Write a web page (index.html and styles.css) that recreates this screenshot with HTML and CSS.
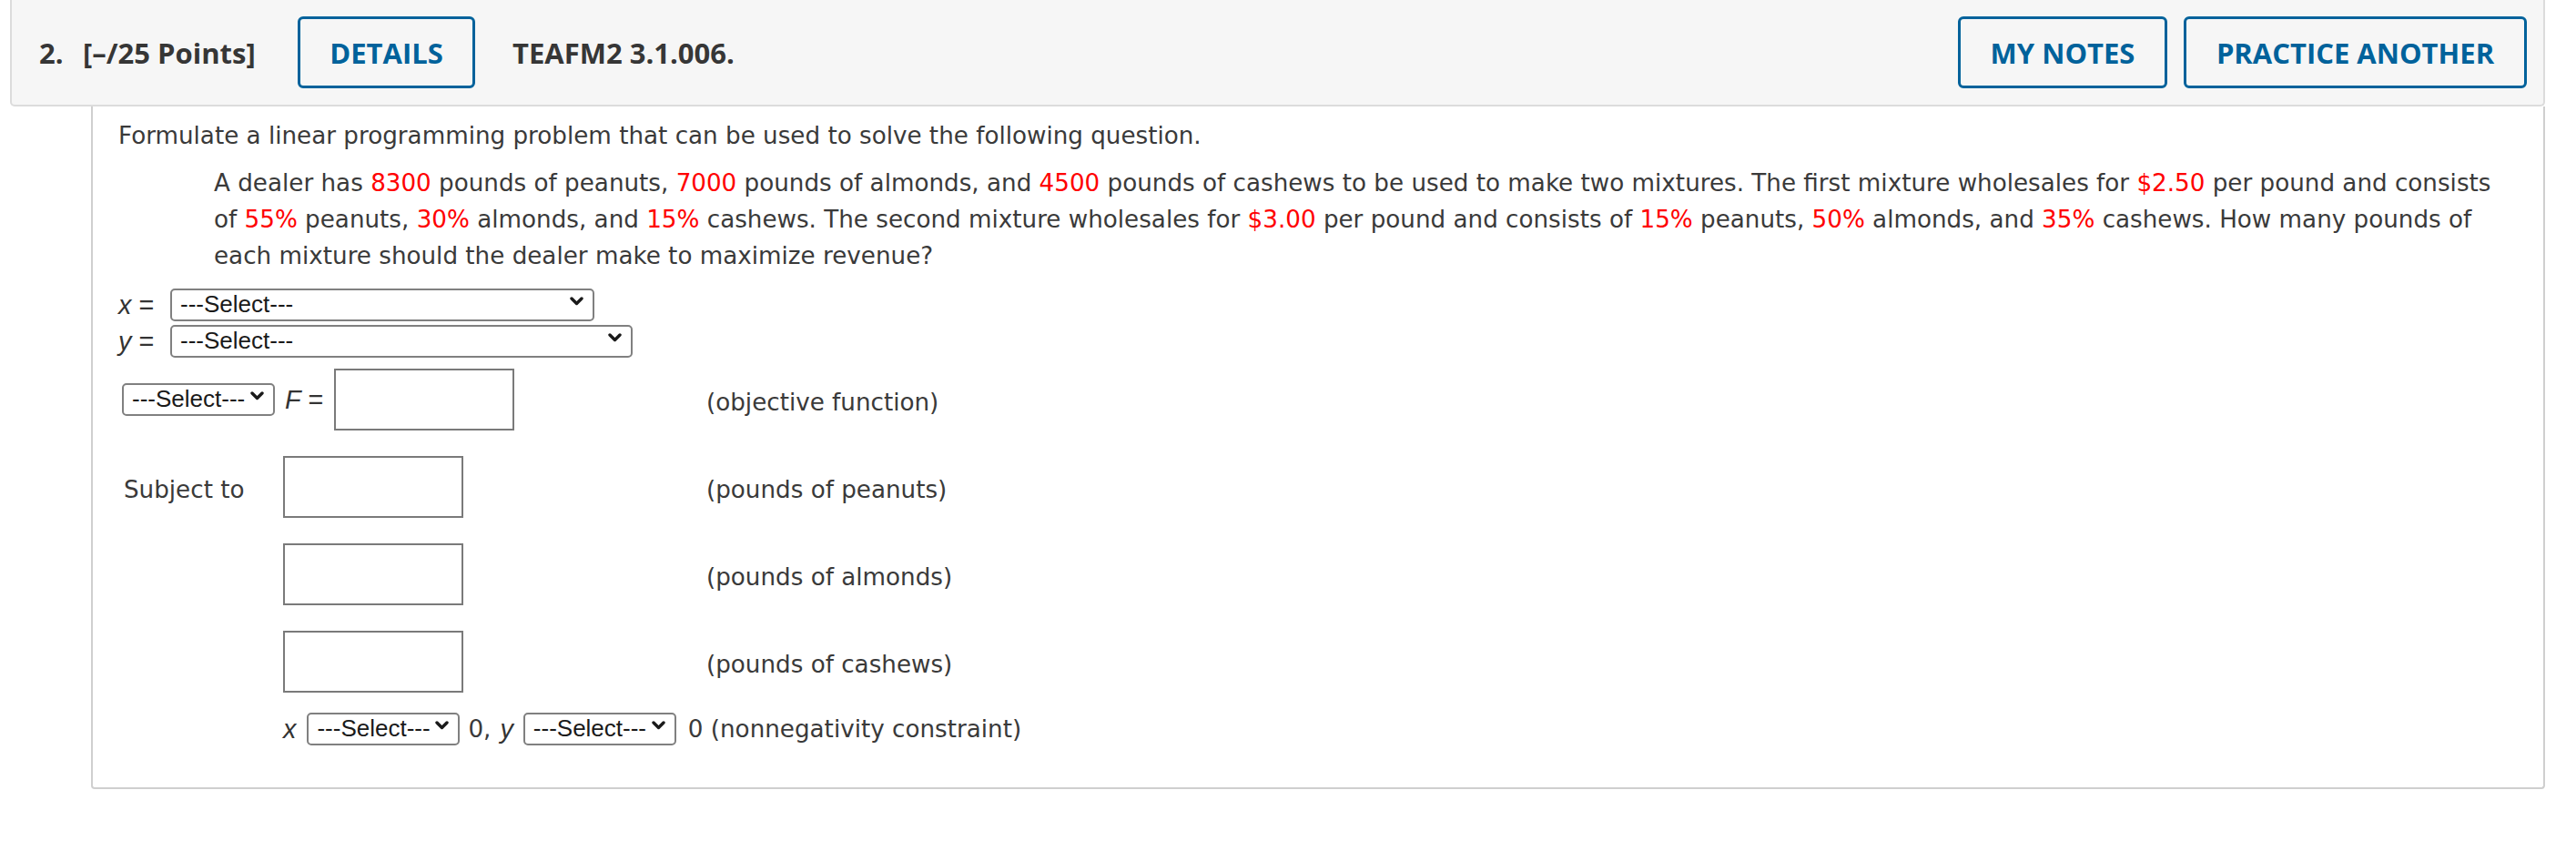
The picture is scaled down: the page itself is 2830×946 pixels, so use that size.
FILE: index.html
```html
<!DOCTYPE html>
<html lang="en">
<head>
<meta charset="utf-8">
<title>Question 2</title>
<link rel="stylesheet" href="styles.css">
</head>
<body>
<div class="question">
  <div class="q-header">
    <span class="q-num">2.</span>
    <span class="q-points">[&ndash;/25 Points]</span>
    <button class="btn btn-details">DETAILS</button>
    <span class="q-code">TEAFM2 3.1.006.</span>
    <div class="q-actions">
      <button class="btn btn-notes">MY NOTES</button>
      <button class="btn btn-practice">PRACTICE ANOTHER</button>
    </div>
  </div>
  <div class="q-body">
    <p class="prompt">Formulate a linear programming problem that can be used to solve the following question.</p>
    <p class="problem">A dealer has <span class="num">8300</span> pounds of peanuts, <span class="num">7000</span> pounds of almonds, and <span class="num">4500</span> pounds of cashews to be used to make two mixtures. The first mixture wholesales for <span class="num">$2.50</span> per pound and consists<br>of <span class="num">55%</span> peanuts, <span class="num">30%</span> almonds, and <span class="num">15%</span> cashews. The second mixture wholesales for <span class="num">$3.00</span> per pound and consists of <span class="num">15%</span> peanuts, <span class="num">50%</span> almonds, and <span class="num">35%</span> cashews. How many pounds of<br>each mixture should the dealer make to maximize revenue?</p>

    <div class="var-row var-row-x">
      <span class="math math-var"><i>x</i> =</span>
      <span class="sel-wrap sel-x">
        <select class="sel"><option>---Select---</option></select>
        <svg class="chev" width="15" height="10" viewBox="0 0 15 10"><path d="M2 2 L7.5 7.5 L13 2" /></svg>
      </span>
    </div>
    <div class="var-row var-row-y">
      <span class="math math-var"><i>y</i> =</span>
      <span class="sel-wrap sel-y">
        <select class="sel"><option>---Select---</option></select>
        <svg class="chev" width="15" height="10" viewBox="0 0 15 10"><path d="M2 2 L7.5 7.5 L13 2" /></svg>
      </span>
    </div>

    <div class="lp-grid">
      <div class="cell">
        <span class="sel-wrap sel-small">
          <select class="sel"><option>---Select---</option></select>
          <svg class="chev" width="15" height="10" viewBox="0 0 15 10"><path d="M2 2 L7.5 7.5 L13 2" /></svg>
        </span>
      </div>
      <div class="cell">
        <span class="math math-f"><i>F</i> =</span>
        <input class="box" type="text">
      </div>
      <div class="cell note">(objective function)</div>

      <div class="cell label">Subject to</div>
      <div class="cell"><input class="box" type="text"></div>
      <div class="cell note">(pounds of peanuts)</div>

      <div class="cell"></div>
      <div class="cell"><input class="box" type="text"></div>
      <div class="cell note">(pounds of almonds)</div>

      <div class="cell"></div>
      <div class="cell"><input class="box" type="text"></div>
      <div class="cell note">(pounds of cashews)</div>
    </div>

    <div class="nonneg">
      <span class="math nn-x"><i>x</i></span>
      <span class="sel-wrap sel-small">
        <select class="sel"><option>---Select---</option></select>
        <svg class="chev" width="15" height="10" viewBox="0 0 15 10"><path d="M2 2 L7.5 7.5 L13 2" /></svg>
      </span>
      <span class="nn-zero">0,</span>
      <span class="math nn-y"><i>y</i></span>
      <span class="sel-wrap sel-small">
        <select class="sel"><option>---Select---</option></select>
        <svg class="chev" width="15" height="10" viewBox="0 0 15 10"><path d="M2 2 L7.5 7.5 L13 2" /></svg>
      </span>
      <span class="nn-tail">0 (nonnegativity constraint)</span>
    </div>
  </div>
</div>
</body>
</html>
```

FILE: styles.css
```css
html, body {
  margin: 0;
  background: #ffffff;
}

.q-header {
  display: flex;
  align-items: center;
  height: 115px;
  margin: 0 34px 0 11px;
  padding: 0 18px 0 30px;
  background: #f6f6f6;
  border: 2px solid #dcdcdc;
  border-top: none;
  border-radius: 0 0 5px 5px;
  font-family: "Open Sans", "Liberation Sans", sans-serif;
  font-weight: 700;
  font-size: 31px;
  color: #363636;
}

.q-num {
  width: 48px;
  flex: none;
}

.q-points {
  width: 236px;
  flex: none;
}

.q-code {
  margin-left: 41px;
}

.btn {
  box-sizing: border-box;
  flex: none;
  height: 79px;
  padding: 0;
  background: transparent;
  border: 3px solid #00629b;
  border-radius: 6px;
  color: #00629b;
  font-family: "Open Sans", "Liberation Sans", sans-serif;
  font-weight: 700;
  font-size: 31px;
  text-align: center;
}

.btn-details {
  width: 195px;
}

.btn-notes {
  width: 230px;
}

.btn-practice {
  width: 377px;
}

.q-actions {
  display: flex;
  gap: 18px;
  margin-left: auto;
}

.q-body {
  margin: 0 34px 0 100px;
  padding: 12px 40px 44px 28px;
  border: 2px solid #cfcfcf;
  border-top: none;
  border-radius: 0 0 4px 4px;
  font-family: "DejaVu Sans", Verdana, sans-serif;
  font-size: 26.2px;
  line-height: 40px;
  color: #3a3a3a;
}

.prompt {
  margin: 0;
}

.problem {
  margin: 12px 0 0 105px;
}

.num {
  color: #ff0000;
}

.math {
  font-family: "Liberation Sans", Arial, sans-serif;
  font-size: 28.8px;
  color: #333333;
}

.math i {
  font-style: italic;
}

.var-row {
  display: flex;
  align-items: center;
  height: 36px;
}

.math-var {
  width: 57px;
  flex: none;
}

.var-row-x {
  margin-top: 16px;
}

.var-row-y {
  margin-top: 4px;
}

.sel-wrap {
  position: relative;
  display: inline-flex;
  flex: none;
}

.sel {
  -webkit-appearance: none;
  appearance: none;
  box-sizing: border-box;
  width: 100%;
  height: 36px;
  margin: 0;
  padding: 0 28px 4px 9px;
  background: #ffffff;
  border: 2px solid #808080;
  border-radius: 5px;
  font-family: "Liberation Sans", Arial, sans-serif;
  font-size: 26px;
  color: #1a1a1a;
}

.chev {
  position: absolute;
  right: 12px;
  top: 9px;
  pointer-events: none;
}

.chev path {
  fill: none;
  stroke: #1a1a1a;
  stroke-width: 3.4;
  stroke-linecap: round;
  stroke-linejoin: round;
}

.sel-x {
  width: 466px;
}

.sel-y {
  width: 508px;
}

.sel-small {
  width: 168px;
}

.lp-grid {
  display: grid;
  grid-template-columns: 177px 465px 1fr;
  grid-auto-rows: 68px;
  row-gap: 28px;
  align-items: center;
  margin: 12px 0 0 4px;
}

.cell {
  display: flex;
  align-items: center;
}

.math-f {
  width: 54px;
  padding-left: 2px;
  flex: none;
}

.label {
  padding: 6px 0 0 2px;
}

.note {
  padding-top: 6px;
}

.box {
  box-sizing: border-box;
  width: 198px;
  height: 68px;
  margin: 0;
  padding: 0 8px;
  border: 2px solid #7a7a7a;
  border-radius: 0;
  background: #ffffff;
  font-family: "DejaVu Sans", Verdana, sans-serif;
  font-size: 25px;
}

.nonneg {
  display: flex;
  align-items: center;
  height: 40px;
  margin: 20px 0 0 181px;
}

.nn-x {
  margin-right: 12px;
}

.nn-zero {
  margin-left: 9px;
  margin-right: 10px;
}

.nn-y {
  margin-right: 11px;
}

.nn-tail {
  margin-left: 13px;
}
```
